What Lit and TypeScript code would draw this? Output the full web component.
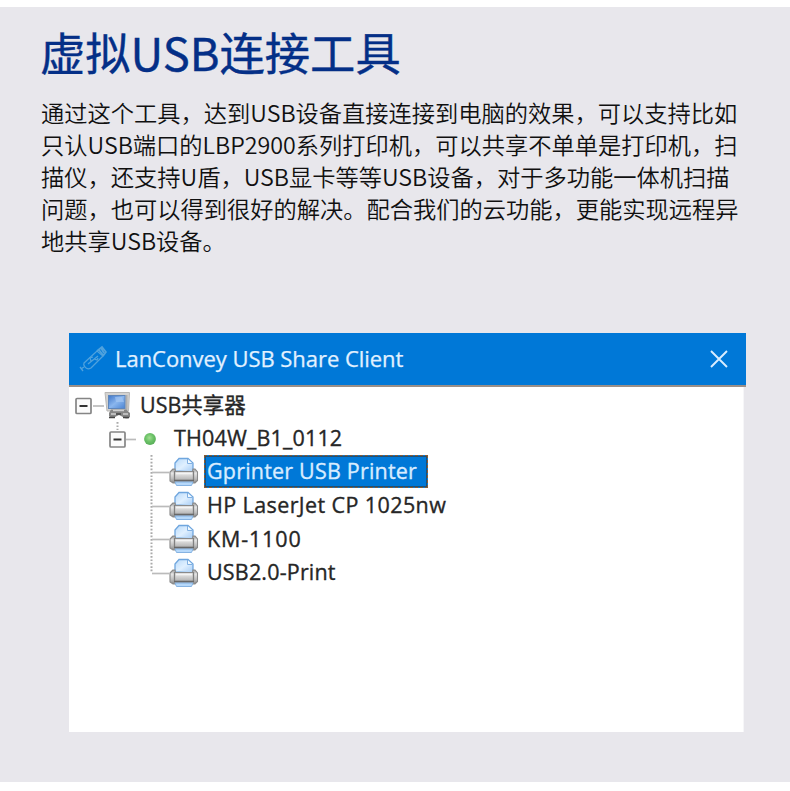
import { LitElement, css, html, svg, nothing } from 'lit';
import { customElement, property } from 'lit/decorators.js';
import { classMap } from 'lit/directives/class-map.js';

interface Printer {
    name: string;
    kind: string;
    selected?: boolean;
}

const PARAGRAPH = [
    '通过这个工具，达到USB设备直接连接到电脑的效果，可以支持比如',
    '只认USB端口的LBP2900系列打印机，可以共享不单单是打印机，扫',
    '描仪，还支持U盾，USB显卡等等USB设备，对于多功能一体机扫描',
    '问题，也可以得到很好的解决。配合我们的云功能，更能实现远程异',
    '地共享USB设备。'
];

const PRINTERS: Printer[] = [
    { name: 'Gprinter USB Printer', kind: 'gprinter', selected: true },
    { name: 'HP LaserJet CP 1025nw', kind: 'hp' },
    { name: 'KM-1100', kind: 'km' },
    { name: 'USB2.0-Print', kind: 'usb2' }
];

const expander = (x: number, y: number) => svg`
    <rect x=${x} y=${y} width="15" height="15" rx="1" fill="#fbfbfb" stroke="#858585" stroke-width="1.7" />
    <path d="M${x + 3.5} ${y + 7.5}h8" stroke="#333" stroke-width="2" />
`;

@customElement('usb-tree')
class UsbTree extends LitElement {
    static styles = css`
        :host {
            display: block;
            padding-top: 1px;
            color: #262626;
        }

        .row {
            display: flex;
            align-items: center;
            height: 33.6px;
        }

        .guide {
            flex: none;
            display: block;
            height: 33.6px;
        }

        .label {
            font-size: 21.5px;
            line-height: 30px;
            white-space: pre;
            -webkit-text-stroke: 0.35px currentColor;
        }

        .root .label {
            padding-left: 7px;
            letter-spacing: 0;
        }

        .device .label {
            padding: 0 0 1px 12px;
            letter-spacing: 0.15px;
        }

        .printer .label {
            box-sizing: border-box;
            height: 33px;
            margin-left: 4px;
            padding: 0 9px 0 2px;
            border: 1px solid transparent;
        }

        .printer.selected .label {
            width: 224px;
            border: 1px dashed #8a5a32;
            outline: 1px solid #25506f;
            outline-offset: -2px;
            background: #0078d7;
            color: #d8ecff;
        }

        .gprinter .label {
            letter-spacing: 0.2px;
        }

        .hp .label {
            letter-spacing: 0.4px;
        }

        .km .label {
            letter-spacing: 0.85px;
        }

        .usb2 .label {
            letter-spacing: 0.18px;
        }
    `;

    @property({ attribute: false }) printers: Printer[] = [];

    render() {
        return html`
            <div class="row root">
                ${this.renderRootGuide()}
                <span class="label">USB共享器</span>
            </div>
            <div class="row device">
                ${this.renderDeviceGuide()}
                <span class="label">TH04W_B1_0112</span>
            </div>
            ${this.printers.map((printer, i) => this.renderPrinter(printer, i === this.printers.length - 1))}
        `;
    }

    private renderRootGuide() {
        return html`<svg class="guide" width="64" height="33.6" viewBox="0 0 64 33.6">
            <defs>
                <linearGradient id="screen" x1="0" y1="0" x2="1" y2="1">
                    <stop offset="0" stop-color="#3f76c8" />
                    <stop offset="0.5" stop-color="#8ab6ee" />
                    <stop offset="1" stop-color="#4a83d2" />
                </linearGradient>
            </defs>
            ${expander(7, 10.5)}
            <path d="M24 18h11" stroke="#bbb" stroke-width="1.7" />
            <path d="M36 4.500H60.500L59.500 23H38z" fill="#d3d2d0" stroke="#b8b7b5" />
            <path d="M57.500 7v15" stroke="#b0afad" stroke-width="2" />
            <rect x="39.500" y="7.500" width="16.500" height="13" fill="url(#screen)" stroke="#5f86ba" />
            <path d="M46 9h7l2 5h-8z" fill="#a8caf3" opacity="0.6" />
            <path d="M42 21.500h15l4 3.500v4q-3 3-7 0l-4-2-4 2q-4 2-6-1v-3z" fill="#858585" />
            <path d="M44 22.500h11M42 26h5M54 26h5" stroke="#d0d0d0" stroke-width="1.700" />
            <path d="M40 29.500h6M54 29.500h6M47 26h5" stroke="#444" stroke-width="1.700" />
        </svg>`;
    }

    private renderDeviceGuide() {
        return html`<svg class="guide" width="93" height="33.6" viewBox="0 0 93 33.6">
            <defs>
                <radialGradient id="led" cx="0.45" cy="0.4" r="0.6">
                    <stop offset="0" stop-color="#a2df91" />
                    <stop offset="0.55" stop-color="#6cc268" />
                    <stop offset="1" stop-color="#58ae58" />
                </radialGradient>
            </defs>
            <path d="M48.500 0v8" stroke="#aaa" stroke-width="2" stroke-dasharray="1.700 1.700" />
            ${expander(41, 10)}
            <path d="M57 17.500h10" stroke="#bbb" stroke-width="1.700" />
            <circle cx="81" cy="17" r="5.900" fill="url(#led)" />
        </svg>`;
    }

    private renderPrinter(printer: Printer, last: boolean) {
        const classes = { row: true, printer: true, selected: !!printer.selected, [printer.kind]: true };

        return html`<div class=${classMap(classes)}>
            <svg class="guide" width="131" height="33.6" viewBox="0 0 131 33.6">
                <defs>
                    <linearGradient id="case" x1="0" y1="0" x2="0" y2="1">
                        <stop offset="0" stop-color="#9d9d9d" />
                        <stop offset="0.3" stop-color="#e6e6e6" />
                        <stop offset="0.7" stop-color="#bcbcbc" />
                        <stop offset="1" stop-color="#858585" />
                    </linearGradient>
                    <linearGradient id="paper" x1="0" y1="0" x2="1" y2="1">
                        <stop offset="0" stop-color="#b9dafa" />
                        <stop offset="0.5" stop-color="#e0f0ff" />
                        <stop offset="1" stop-color="#a4cbf5" />
                    </linearGradient>
                </defs>
                <path d="M82.500 0V${last ? 17 : 33.6}" stroke="#aaa" stroke-width="2" stroke-dasharray="1.700 1.700" />
                <path d="M83 17.500h17" stroke="#bbb" stroke-width="1.700" />
                <path d="M106 16V8L110 3.500H119L124 8V17z" fill="url(#paper)" stroke="#6fa6de" stroke-width="1.300" />
                <path d="M118.500 4v4.500h5" fill="#f3faff" stroke="#7fb0e2" />
                <path d="M104 14l-3 3v9l3 2h22l2.500-2.500V17l-2.500-3h-2l-.500 2.500h-17l-.500-2.500z"
                    fill="url(#case)" stroke="#8a8a8a" stroke-width="1.100" />
                <path d="M105.500 16v9M124.500 16v9" stroke="#808080" stroke-width="1.300" />
                <path d="M107 18.500h16" stroke="#f4f4f4" stroke-width="1.500" />
                <path d="M105 25.500h20" stroke="#686868" stroke-width="1.500" />
                <path d="M106 27h18l-1.500 3.500h-15z" fill="#b7d9fa" stroke="#85b3e2" />
            </svg>
            <span class="label">${printer.name || nothing}</span>
        </div>`;
    }
}

@customElement('app-root')
class AppRoot extends LitElement {
    static styles = css`
        :host {
            display: block;
            box-sizing: border-box;
            height: 791px;
            padding: 7px 0 9px;
            background: #fff;
            overflow: hidden;
        }

        .page {
            box-sizing: border-box;
            height: 775px;
            padding: 17px 44px 0 40px;
            background: #e8e7ec;
            font-family: 'Noto Sans CJK SC', sans-serif;
        }

        h1 {
            margin: 0;
            height: 54px;
            color: #042f87;
            font-size: 45.3px;
            font-weight: 400;
            line-height: 54px;
            white-space: nowrap;
            -webkit-text-stroke: 0.4px currentColor;
        }

        p {
            margin: 18px 0 0;
            padding-left: 1px;
            color: #101010;
            font-size: 23.26px;
            font-weight: 350;
            line-height: 32px;
            white-space: nowrap;
        }

        .window {
            width: 677px;
            height: 399px;
            margin: 77px 0 0 29px;
            font-family: 'Open Sans', 'Noto Sans CJK SC', sans-serif;
        }

        .titlebar {
            display: flex;
            align-items: center;
            box-sizing: border-box;
            height: 54px;
            padding: 0 17px 1px 9px;
            border-bottom: 2px solid #9a8f88;
            background: #0078d7;
            color: #e2f1ff;
        }

        .caption {
            flex: 1;
            margin-left: 8px;
            padding-bottom: 2px;
            font-size: 22px;
            line-height: 30px;
            letter-spacing: -0.04px;
            white-space: nowrap;
            -webkit-text-stroke: 0.25px currentColor;
        }

        .client {
            box-sizing: border-box;
            width: 675px;
            height: 345px;
            background: #fff;
            border-right: 1px solid #f6f6f8;
        }
    `;

    render() {
        return html`<main class="page">
            <h1>虚拟USB连接工具</h1>
            <p>${PARAGRAPH.map((line, i) => html`${i > 0 ? html`<br />` : nothing}${line}`)}</p>
            <section class="window">
                <header class="titlebar">
                    <svg width="29" height="30" viewBox="0 0 29 30" fill="none" stroke="#50a2dd" stroke-width="1.300">
                        <path d="M6 19L19 7l6 5-12 12q-4 2-6-1-2-2-1-4z" />
                        <path d="M19 7l5-4 4 5-3 4M23 4l3 5M21 6l4 5" stroke-width="1.700" />
                        <path d="M10 20l10-8M13 17l-1-3 3-1M16 15l3 1 1-2M6 23l-3 2M2 23l3 4" />
                    </svg>
                    <span class="caption">LanConvey USB Share Client</span>
                    <svg width="20" height="20" viewBox="0 0 20 20">
                        <path d="M2 2l16 16M18 2L2 18" stroke="#d9edff" stroke-width="1.900" />
                    </svg>
                </header>
                <div class="client">
                    <usb-tree .printers=${PRINTERS}></usb-tree>
                </div>
            </section>
        </main>`;
    }
}
